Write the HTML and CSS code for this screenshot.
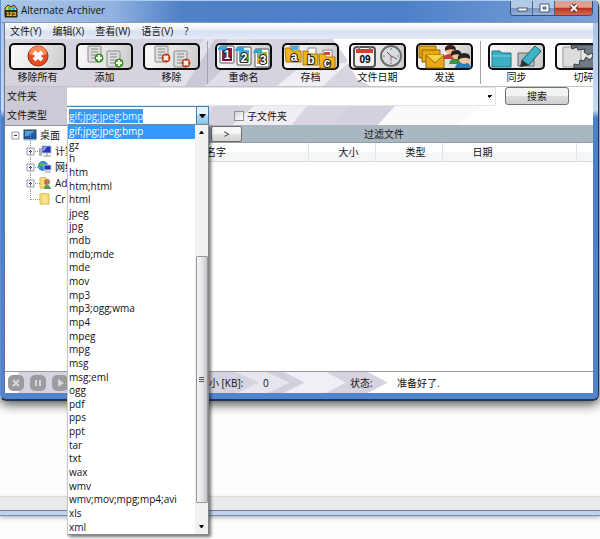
FILE: index.html
```html
<!DOCTYPE html>
<html lang="zh-CN">
  <head>
    <meta charset="UTF-8" />
    <meta name="viewport" content="width=device-width, initial-scale=1.0" />
    <title>Alternate Archiver</title>
    <link rel="stylesheet" href="styles.css">
  </head>
  <body>
    <div class="window">
      <header class="titlebar">
        <svg class="appIcon" viewBox="0 0 14 14">
          <path d="M1 4l3-3 3 2 3-2 3 4v8H1z" fill="#f4cf28" stroke="#222" />
          <path d="M4 3h3v3H4z" fill="#5cc34a" />
          <path d="M8 3h3v3H8z" fill="#4aa5e8" />
          <rect x="1" y="6" width="12" height="7" fill="#332900" />
          <text x="7" y="12" class="appDigits">123</text>
        </svg>
        <h1>Alternate Archiver</h1>
        <div class="windowControls">
          <button class="minimize" aria-label="Minimize">
            <svg viewBox="0 0 14 14"><rect x="3" y="7" width="9" height="3" fill="#fff" stroke="#4b5876" /></svg>
          </button>
          <button class="maximize" aria-label="Maximize">
            <svg viewBox="0 0 14 14"><path d="M3 3h9v8H3zM6 6v2h3V6z" fill="#fff" fill-rule="evenodd" stroke="#4b5876" /></svg>
          </button>
          <button class="close" aria-label="Close">
            <svg viewBox="0 0 14 14">
              <path d="M4 4l6 6M10 4l-6 6" stroke="#5e2a2a" stroke-width="4" />
              <path d="M4 4l6 6M10 4l-6 6" stroke="#fff" stroke-width="2" />
            </svg>
          </button>
        </div>
      </header>

      <div class="client">
        <nav class="menu">
          <a href="#">文件(Y)</a>
          <a href="#">编辑(X)</a>
          <a href="#">查看(W)</a>
          <a href="#">语言(V)</a>
          <a href="#">?</a>
        </nav>

        <div class="top">
          <svg class="stripes" width="588" height="86" viewBox="0 0 588 86">
            <path d="M0 0H328L343 22L278 87H0z" fill="#d6d3df" />
            <path d="M232 0H200L113 87H165L225 25z" fill="#e4e1eb" />
            <path d="M180 47L210 0H222L226 24L200 47z" fill="#cbc8d7" />
            <path d="M222 0H245L257 20L190 87H160L220 28z" fill="#e0dde8" />
            <path d="M300 24L272 47L226 87H305L330 50L345 24z" fill="#f0eef4" />
            <path d="M343 22L290 87H362L395 66H362L388 47H354L370 30z" fill="#fff" />
            <path d="M343 24L318 47L286 87H330L366 47L352 40z" fill="#d8d5e1" />
            <path d="M345 66H391L372 87H328z" fill="#d4d1de" />
            <path d="M391 66H480L450 87H372z" fill="#faf9fb" />
          </svg>

          <div class="toolbar">
            <button class="tool">
              <svg viewBox="0 0 57 27">
                <circle cx="29" cy="13" r="10" fill="#e64a20" stroke="#9c2a10" />
                <path d="M20 11a9 8 0 0 1 18 0q-9 4-18 0z" fill="#f58a5a" />
                <path d="M25 9l8 8M33 9l-8 8" stroke="#fff" stroke-width="4" />
              </svg>
              <span>移除所有</span>
            </button>
            <button class="tool">
              <svg viewBox="0 0 57 27">
                <g fill="#dedede" stroke="#8a8a8a">
                  <rect x="12" y="3" width="13" height="16" rx="1" />
                  <rect x="31" y="8" width="13" height="16" rx="1" />
                  <path d="M15 6h7M15 9h7M15 12h5M15 15h5M34 11h7M34 14h7M34 17h5M34 20h5" />
                </g>
                <g fill="#55b13a" stroke="#2f7d22"><circle cx="23" cy="15" r="4" /><circle cx="43" cy="20" r="4" /></g>
                <path d="M20 15h6M23 12v6M40 20h6M43 17v6" stroke="#fff" stroke-width="2" />
              </svg>
              <span>添加</span>
            </button>
            <button class="tool">
              <svg viewBox="0 0 57 27">
                <g fill="#dedede" stroke="#8a8a8a">
                  <rect x="12" y="3" width="13" height="16" rx="1" />
                  <rect x="31" y="8" width="13" height="16" rx="1" />
                  <path d="M15 6h7M15 9h7M15 12h5M15 15h5M34 11h7M34 14h7M34 17h5M34 20h5" />
                </g>
                <g fill="#e4512c" stroke="#a8341a"><circle cx="23" cy="15" r="4" /><circle cx="43" cy="20" r="4" /></g>
                <path d="M21 13l4 4M25 13l-4 4M41 18l4 4M45 18l-4 4" stroke="#fff" stroke-width="2" />
              </svg>
              <span>移除</span>
            </button>
            <div class="separator"></div>
            <button class="tool">
              <svg viewBox="0 0 57 27">
                <g fill="#fff" stroke="#555">
                  <rect x="5" y="3" width="14" height="17" rx="1" />
                  <rect x="22" y="4" width="14" height="18" rx="1" />
                  <rect x="40" y="6" width="14" height="18" rx="1" />
                </g>
                <path d="M7 5h10v13H7z" fill="#8b1c55" />
                <path d="M24 7h10v12H24z" fill="#48a8dd" />
                <path d="M24 17l10-6v8H24z" fill="#63bb4b" />
                <path d="M42 9h10v12H42z" fill="#ef9f25" />
                <path d="M42 9h10l-10 7z" fill="#7bc14b" />
                <path d="M3 5l2-2h7v4H3zM20 7l2-3h7v4h-9zM38 9l3-3h6v4h-9z" fill="#35a4dc" />
                <g class="iconDigits"><text x="12" y="16">1</text><text x="29" y="19">2</text><text x="48" y="21">3</text></g>
              </svg>
              <span>重命名</span>
            </button>
            <button class="tool">
              <svg viewBox="0 0 57 27">
                <g fill="#fff" stroke="#888"><path d="M8 3h9v8H8zM26 5h8v7h-8zM41 7h9v8h-9z" /></g>
                <path d="M9 3h7v4H9z" fill="#4dafd9" />
                <path d="M42 9h6v3h-6z" fill="#db4540" />
                <g fill="#f3b51e" stroke="#af7605">
                  <path d="M3 5h5l2 3h9v11H4z" /><path d="M21 8h4l2 3h9v11H21z" /><path d="M37 11h5l2 3h9v11H38z" />
                </g>
                <g class="iconDigits"><text x="12" y="18">a</text><text x="29" y="21">b</text><text x="45" y="24">c</text></g>
              </svg>
              <span>存档</span>
            </button>
            <button class="tool">
              <svg viewBox="0 0 57 27">
                <rect x="5" y="4" width="21" height="20" rx="3" fill="#f2f2f2" stroke="#555" stroke-width="2" />
                <path d="M7 6h17v4H7z" fill="#dc3b31" />
                <path d="M10 3v4M21 3v4" stroke="#777" stroke-width="2" />
                <text class="calendarDay" x="16" y="20">09</text>
                <circle cx="42" cy="13" r="10" fill="#d9dde0" stroke="#6c6f72" stroke-width="2" />
                <path d="M42 5v2M42 19v2M34 13h2M48 13h2" stroke="#777" />
                <path d="M38 9l4 4 6 3" fill="none" stroke="#555" />
                <path d="M42 13v5" stroke="#d64f4f" />
              </svg>
              <span>文件日期</span>
            </button>
            <button class="tool">
              <svg viewBox="0 0 57 27">
                <g fill="#e9ab13" stroke="#946504">
                  <path d="M3 3h17v12H3z" /><path d="M6 7h18v12H6z" /><path d="M10 12h18v13H10z" />
                  <path d="M10 12l9 8 9-8" fill="#fad243" />
                </g>
                <path d="M27 15q2-4 7-4t7 5H27z" fill="#c23d3d" />
                <circle cx="34" cy="7" r="4" fill="#f2bd91" />
                <path d="M29 8q-1-6 5-6t6 5q-7-2-11 1z" fill="#3c1f18" />
                <path d="M33 21q1-6 7-6t7 6z" fill="#3f9042" />
                <circle cx="40" cy="12" r="4" fill="#f2bd91" />
                <path d="M35 13q-1-6 5-6t5 5q-6-2-10 1z" fill="#222" />
                <path d="M39 25q1-6 8-6t8 6z" fill="#2580b9" />
                <circle cx="48" cy="16" r="5" fill="#f5c69d" />
                <path d="M42 17q-1-7 6-7t6 6q-7-3-12 1z" fill="#252528" />
              </svg>
              <span>发送</span>
            </button>
            <div class="separator"></div>
            <button class="tool">
              <svg viewBox="0 0 57 27">
                <path d="M4 8h8l2 2h9v14H4z" fill="#3cafc4" stroke="#207083" />
                <path d="M4 13h19" stroke="#7ad3df" />
                <path d="M30 10h16v13H30z" fill="#b7bac0" stroke="#65686d" />
                <path d="M34 17L47 3l6 5-12 14-8 1z" fill="#3eb4c9" stroke="#1f5968" />
                <path d="M32 24l2-7 7 5z" fill="#333" />
              </svg>
              <span>同步</span>
            </button>
            <button class="tool">
              <svg viewBox="0 0 57 27">
                <path d="M8 4h18v20H8z" fill="#dcdcdc" stroke="#999" />
                <g fill="#717981" stroke="#343a40">
                  <path d="M16 2h38v6l-4-1-2 4-4-1-1 3h-5l-1-3-4 2-4-3 1-3-7 1-1-3-5 2z" />
                  <path d="M19 25v-4l5 1 1-5 4 1 2-4 4 3 3-4 4 2 2-3 4 4 4-2v11z" />
                </g>
              </svg>
              <span>切碎</span>
            </button>
          </div>

          <form class="filters">
            <label for="folder">文件夹</label>
            <div class="folderRow">
              <select id="folder" class="folder"><option></option></select>
              <button type="button" class="search">搜索</button>
            </div>
            <label for="fileType">文件类型</label>
            <div class="typeRow">
              <div class="combo">
                <input id="fileType" type="text" value="gif;jpg;jpeg;bmp" role="combobox" aria-expanded="true" aria-controls="typeList" />
                <button type="button" class="comboArrow" aria-label="文件类型">
                  <svg viewBox="0 0 7 4"><path d="M0 0h7L4 4H3z" /></svg>
                </button>
                <div class="popup">
                  <ul id="typeList" role="listbox">
                    <li role="option" aria-selected="true" class="selected">gif;jpg;jpeg;bmp</li>
                    <li role="option">gz</li>
                    <li role="option">h</li>
                    <li role="option">htm</li>
                    <li role="option">htm;html</li>
                    <li role="option">html</li>
                    <li role="option">jpeg</li>
                    <li role="option">jpg</li>
                    <li role="option">mdb</li>
                    <li role="option">mdb;mde</li>
                    <li role="option">mde</li>
                    <li role="option">mov</li>
                    <li role="option">mp3</li>
                    <li role="option">mp3;ogg;wma</li>
                    <li role="option">mp4</li>
                    <li role="option">mpeg</li>
                    <li role="option">mpg</li>
                    <li role="option">msg</li>
                    <li role="option">msg;eml</li>
                    <li role="option">ogg</li>
                    <li role="option">pdf</li>
                    <li role="option">pps</li>
                    <li role="option">ppt</li>
                    <li role="option">tar</li>
                    <li role="option">txt</li>
                    <li role="option">wax</li>
                    <li role="option">wmv</li>
                    <li role="option">wmv;mov;mpg;mp4;avi</li>
                    <li role="option">xls</li>
                    <li role="option">xml</li>
                  </ul>
                  <div class="scrollbar">
                    <svg viewBox="0 0 5 3"><path d="M0 3h5L3 0H2z" /></svg>
                    <div class="thumb"><i></i><i></i><i></i></div>
                    <svg viewBox="0 0 5 3"><path d="M0 0h5L3 3H2z" /></svg>
                  </div>
                </div>
              </div>
              <label class="check"><input type="checkbox" />子文件夹</label>
            </div>
          </form>
        </div>

        <div class="main">
          <ul class="tree">
            <li class="root">
              <svg class="toggle" viewBox="0 0 9 9"><path d="M1 1h7v7H1z" /><path d="M3 4h3v1H3z" class="mark" /></svg>
              <svg class="node" viewBox="0 0 14 12">
                <rect x="1" y="1" width="12" height="9" fill="#1e5ca8" stroke="#345" />
                <path d="M2 2h10L5 7H2z" fill="#57a0dd" />
                <path d="M1 11h12" stroke="#8cc3ea" />
              </svg>
              桌面
            </li>
            <li>
              <svg class="toggle" viewBox="0 0 9 9"><path d="M1 1h7v7H1z" /><path d="M3 4h3v1H3zM4 3h1v3H4z" class="mark" /></svg>
              <svg class="node" viewBox="0 0 14 12">
                <rect x="1" y="3" width="3" height="8" fill="#aab2bb" />
                <rect x="4" y="1" width="9" height="7" fill="#2434c4" stroke="#b8bfca" />
                <path d="M5 2h4L6 6H5z" fill="#7f9cf0" />
                <path d="M5 11h8M9 8v3" stroke="#8c949f" />
              </svg>
              计算机
            </li>
            <li>
              <svg class="toggle" viewBox="0 0 9 9"><path d="M1 1h7v7H1z" /><path d="M3 4h3v1H3zM4 3h1v3H4z" class="mark" /></svg>
              <svg class="node" viewBox="0 0 14 12">
                <circle cx="5" cy="5" r="5" fill="#2b83d2" />
                <path d="M1 3q4-3 6 0L4 6 2 5zM5 8l3-1v2z" fill="#57bb55" />
                <rect x="6" y="4" width="7" height="5" fill="#2136b8" stroke="#b9c8dd" />
                <path d="M7 11h6" stroke="#8c949f" />
              </svg>
              网络
            </li>
            <li>
              <svg class="toggle" viewBox="0 0 9 9"><path d="M1 1h7v7H1z" /><path d="M3 4h3v1H3zM4 3h1v3H4z" class="mark" /></svg>
              <svg class="node" viewBox="0 0 14 12">
                <path d="M2 1l5-1 1 1v10H2z" fill="#f6dd7c" stroke="#d8b74a" />
                <path d="M6 12q0-4 3-4t4 4z" fill="#4d9a58" />
                <circle cx="9" cy="5" r="3" fill="#b77b55" />
              </svg>
              Ad
            </li>
            <li>
              <span class="toggle"></span>
              <svg class="node" viewBox="0 0 14 12">
                <path d="M2 1l5-1 1 1h3v10H2z" fill="#f6dd7c" stroke="#d8b74a" />
                <path d="M7 3v8" stroke="#fff4bd" />
              </svg>
              Cr
            </li>
          </ul>

          <section class="files">
            <div class="filterBar">
              <button>&gt;</button>
              <h2>过滤文件</h2>
            </div>
            <table>
              <thead>
                <tr>
                  <th class="name">名字</th>
                  <th class="size">大小</th>
                  <th class="type">类型</th>
                  <th class="date">日期</th>
                  <th></th>
                </tr>
              </thead>
            </table>
          </section>
        </div>

        <footer class="status">
          <svg class="chevrons" width="588" height="21" viewBox="0 0 588 22">
            <path d="M0 0H228L253 11L230 22H0z" fill="#d5d3df" />
            <path d="M228 0H278L298 11L278 22H230L253 11z" fill="#e7e5ee" />
            <path d="M260 0H284L305 11L284 22H262L284 11z" fill="#d3d0de" />
            <path d="M278 0H322L343 11L322 22H278L300 11z" fill="#f1eff6" />
            <path d="M322 0H366L387 11L366 22H322L343 11z" fill="#d6d3e0" />
          </svg>
          <div class="playback">
            <button aria-label="Cancel"><svg viewBox="0 0 16 16"><path d="M5 5l6 6M11 5l-6 6" /></svg></button>
            <button aria-label="Pause"><svg viewBox="0 0 16 16"><path d="M6 5v6M10 5v6" /></svg></button>
            <button aria-label="Start"><svg viewBox="0 0 16 16"><path class="play" d="M6 4l6 4-6 4z" /></svg></button>
          </div>
          <span class="sizeLabel">大小 [KB]:</span>
          <span class="sizeValue">0</span>
          <span class="stateLabel">状态:</span>
          <span>准备好了.</span>
        </footer>
      </div>
    </div>

    <div class="backWindow"></div>
  </body>
</html>
```
FILE: styles.css
```css
* {
  box-sizing: border-box;
}
body {
  margin: 0;
  min-height: 100vh;
  background: #fdfdfd;
  font-family: "Open Sans", "Noto Sans CJK SC", sans-serif;
  font-size: 10px;
  line-height: 14px;
  color: #111;
}
button,
input,
select {
  font: inherit;
  color: inherit;
  margin: 0;
  padding: 0;
}
h1,
h2,
ul {
  margin: 0;
  padding: 0;
  font-size: inherit;
  font-weight: normal;
  list-style: none;
}
svg {
  display: block;
}

/* window frame */
.window {
  position: relative;
  z-index: 1;
  margin-right: 1px;
  padding: 0 5px 6px 3px;
  border: 1px solid #27364c;
  border-top: 0;
  border-left-color: #5c8fd8;
  border-bottom-width: 2px;
  border-radius: 0 6px 6px 6px;
  background: linear-gradient(#a5c0e6 0, #c6daf3 110px, #4a7fcb 118px, #5283cb);
  box-shadow: 0 3px 12px #000b;
}
.titlebar {
  display: flex;
  height: 23px;
  margin: 0 -5px 0 -3px;
  padding: 0 5px 0 3px;
  border-top: 1px solid #a9cbee;
  border-bottom: 1px solid #8598b5;
  border-radius: 0 6px 0 0;
  background: linear-gradient(90deg, #aec7e8, #92b3e0 110px, #5080c6 180px, #4e80c8 400px, #7ca2d8);
}
.appIcon {
  width: 14px;
  height: 14px;
  margin-top: 3px;
}
.appDigits {
  font: bold 6px "Liberation Sans", sans-serif;
  text-anchor: middle;
  fill: #ffe94d;
}
.titlebar h1 {
  flex: 1;
  padding: 2px 0 0 3px;
  line-height: 15px;
}
.windowControls {
  display: flex;
  height: 15px;
  border: 1px solid #3d4f70;
  border-top: 0;
  border-radius: 0 0 4px 4px;
  overflow: hidden;
}
.windowControls button {
  display: flex;
  justify-content: center;
  width: 22px;
  border: 0;
  border-right: 1px solid #4b6088;
  background: linear-gradient(#b6c9e4 50%, #7895c0 50%, #93b2dc);
}
.windowControls .close {
  width: 37px;
  border-right: 0;
  background: linear-gradient(#dfa18f 45%, #b9311d 50%, #d46a4c);
}
.windowControls svg {
  width: 14px;
  height: 14px;
}

.client {
  border-left: 1px solid #66748c;
  background: #fff;
}
.menu {
  display: flex;
  gap: 11px;
  height: 16px;
  padding: 0 5px;
  line-height: 16px;
  background: linear-gradient(#fff, #e8edf8 45%, #d6dff1 50%, #e4eaf7);
}
.menu a {
  color: inherit;
  text-decoration: none;
}

/* toolbar */
.top {
  position: relative;
  z-index: 1;
}
.stripes,
.chevrons {
  position: absolute;
  top: 0;
  left: 0;
  z-index: -1;
}
.toolbar {
  display: flex;
  gap: 10px;
  height: 48px;
  padding: 2px 0 0 4px;
  border-bottom: 1px solid #c4c3ca;
  overflow: hidden;
}
.tool {
  flex: none;
  width: 57px;
  border: 0;
  background: none;
}
.tool svg {
  width: 57px;
  height: 27px;
  border-radius: 5px;
  background: linear-gradient(100deg, #fafafa, #e2e2e2 60%, #c9c9c9);
  box-shadow: inset 0 0 0 2px #0c0c0c;
}
.tool span {
  display: block;
}
.separator {
  flex: none;
  width: 1px;
  height: 43px;
  margin: 0 -3px;
  background: #a3a2ab;
}
.iconDigits {
  font: bold 12px "Liberation Sans", sans-serif;
  text-anchor: middle;
  fill: #fff;
  stroke: #222;
  stroke-width: 2px;
  paint-order: stroke;
}
.calendarDay {
  font: bold 10px "Liberation Sans", sans-serif;
  text-anchor: middle;
}

/* folder and type rows */
.filters {
  display: grid;
  grid-template-columns: 62px 1fr;
  grid-template-rows: 19px 19px;
}
.filters > label {
  padding-left: 2px;
  line-height: 18px;
  background: #cdcad8;
}
.folderRow {
  display: flex;
  gap: 9px;
  background: #fff;
}
.folder {
  flex: 1;
  padding-left: 3px;
  border: 1px solid #e3e3e6;
  border-left: 0;
  border-radius: 0;
  appearance: none;
  background: linear-gradient(45deg, #0000 50%, #111 50%) right 5px center / 3px 3px no-repeat,
    linear-gradient(-45deg, #0000 50%, #111 50%) right 2px center / 3px 3px no-repeat, #fff;
}
.search {
  width: 64px;
  height: 18px;
  margin-right: 24px;
  border: 1px solid #707070;
  border-radius: 3px;
  line-height: 14px;
  background: linear-gradient(#f3f3f3 50%, #dedede 50%, #cfcfcf);
}
.typeRow {
  display: flex;
  align-items: center;
  gap: 25px;
}
.combo {
  position: relative;
  display: flex;
  align-items: center;
  width: 142px;
  height: 19px;
  padding-left: 2px;
  border: 1px solid #4d8ab4;
  border-left: 0;
  background: #fff;
}
.combo input {
  field-sizing: content;
  height: 14px;
  border: 0;
  outline: 0;
  color: #e8f4ff;
  background: #3399ff;
}
.comboArrow {
  display: flex;
  justify-content: center;
  align-items: center;
  width: 13px;
  height: 19px;
  margin: 0 -1px 0 auto;
  border: 1px solid #3c7fb1;
  background: linear-gradient(#e3f4fc 50%, #a9daf2 50%, #86c5e6);
}
.comboArrow svg {
  width: 7px;
  height: 4px;
}
.popup {
  position: absolute;
  top: 17px;
  left: 0;
  display: flex;
  width: 142px;
  height: 411px;
  border: 1px solid #828790;
  border-left-color: #c4c8d0;
  background: #fff;
  box-shadow: 2px 2px 3px #0008;
}
.popup ul {
  flex: 1;
  display: flex;
  flex-direction: column;
}
.popup li {
  flex: 1;
  min-height: 0;
  padding-left: 1px;
  line-height: 13px;
}
.popup .selected {
  color: #fff;
  background: #3399ff;
}
.scrollbar {
  display: flex;
  flex-direction: column;
  align-items: center;
  width: 13px;
  padding: 6px 0;
  background: #f1f1f1;
}
.scrollbar svg {
  width: 5px;
  height: 3px;
}
.thumb {
  display: flex;
  flex-direction: column;
  justify-content: center;
  align-items: center;
  gap: 1px;
  width: 12px;
  height: 247px;
  margin: auto 0 22px;
  border: 1px solid #979797;
  border-radius: 1px;
  background: linear-gradient(90deg, #f6f6f6, #e6e6e8 50%, #c2c4c8);
}
.thumb i {
  width: 5px;
  height: 1px;
  background: #555;
}
.check {
  display: flex;
  align-items: center;
  gap: 3px;
}
.check input {
  appearance: none;
  width: 10px;
  height: 10px;
  border: 1px solid #8e8f8f;
  background: linear-gradient(135deg, #d5d5d8, #fff);
}

/* tree and file list */
.main {
  display: flex;
  height: 246px;
}
.tree {
  width: 196px;
  padding: 1px 0 0 6px;
  border-top: 1px solid #8b93a0;
  overflow: hidden;
}
.tree li {
  position: relative;
  display: flex;
  align-items: center;
  gap: 3px;
  height: 16px;
  margin-left: 15px;
}
.tree .root {
  margin-left: 0;
}
.tree li:not(.root)::before {
  content: "";
  position: absolute;
  top: -8px;
  left: 4px;
  width: 9px;
  height: 16px;
  border-left: 1px dotted #999;
  border-bottom: 1px dotted #999;
}
.toggle {
  position: relative;
  width: 9px;
  height: 9px;
  fill: #fff;
  stroke: #8f9ba8;
}
.toggle .mark {
  fill: #335;
  stroke: none;
}
.node {
  width: 14px;
  height: 12px;
}
.files {
  flex: 1;
}
.filterBar {
  display: flex;
  align-items: center;
  height: 18px;
  padding-left: 10px;
  background: #a9b7c0;
  border-bottom: 1px solid #919da6;
}
.filterBar button {
  width: 31px;
  height: 16px;
  border: 1px solid #707070;
  border-radius: 2px;
  line-height: 12px;
  background: linear-gradient(#f6f6f6 50%, #e2e2e2 50%, #d2d2d2);
}
.filterBar h2 {
  padding-left: 122px;
}
table {
  width: 100%;
  border-collapse: collapse;
  table-layout: fixed;
}
th {
  height: 18px;
  padding: 0 0 0 30px;
  border-right: 1px solid #e0e3e8;
  border-bottom: 1px solid #d5d8dd;
  font-weight: normal;
  text-align: left;
  background: linear-gradient(#fff 50%, #f5f6f8 50%);
}
th:last-child {
  border-right: 0;
  padding: 0;
}
.name {
  width: 107px;
  padding-left: 5px;
}
.size,
.type {
  width: 67px;
}
.date {
  width: 134px;
}

/* status bar */
.status {
  position: relative;
  z-index: 0;
  display: flex;
  align-items: center;
  height: 22px;
  padding-left: 3px;
  border-top: 1px solid #9b9ba3;
}
.playback {
  display: flex;
  gap: 6px;
  width: 191px;
}
.playback button {
  width: 16px;
  height: 16px;
  border: 0;
  border-radius: 5px;
  background: #9c9ca0;
}
.playback path {
  fill: none;
  stroke: #d8d8d8;
  stroke-width: 2;
}
.playback .play {
  fill: #d8d8d8;
  stroke: none;
}
.sizeLabel {
  width: 64px;
}
.sizeValue {
  width: 87px;
}
.stateLabel {
  width: 47px;
}

/* edge of the window behind */
.backWindow {
  height: 20px;
  margin-top: 95px;
  border-top: 1px solid #dcdcdc;
  border-bottom: 1px solid #7c8ca3;
  background: linear-gradient(#ebebeb 13px, #6f7f96 13px, #6f7f96 14px, #bfd3ee 14px);
  box-shadow: 0 2px 4px #0004;
}
```
